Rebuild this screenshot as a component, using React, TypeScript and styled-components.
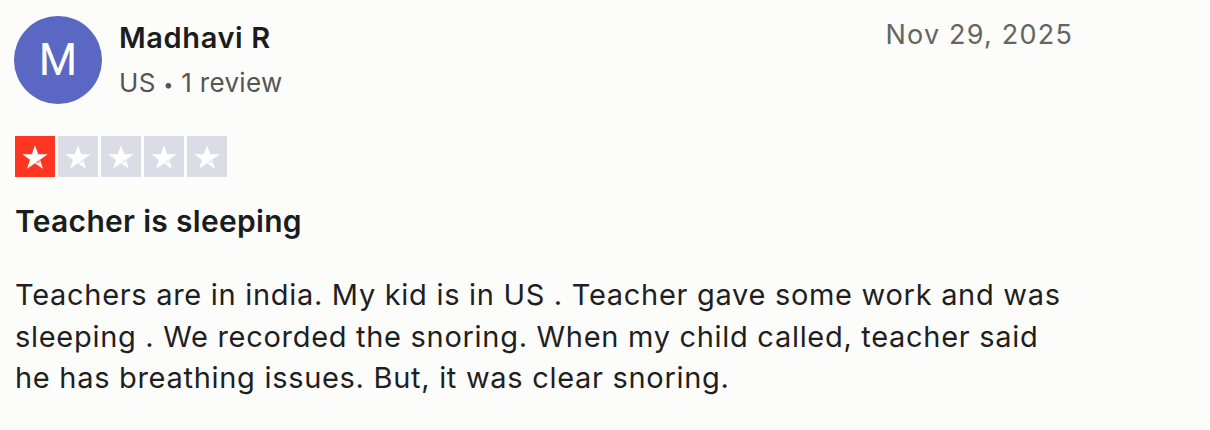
import styled, { createGlobalStyle } from 'styled-components';

const GlobalStyle = createGlobalStyle`
  html, body {
    margin: 0;
    padding: 0;
    background: #fcfcfb;
  }
  body {
    font-family: Inter, "Noto Sans", sans-serif;
    color: #1c1c1c;
  }
`;

const review = {
  name: 'Madhavi R',
  country: 'US',
  reviews: '1 review',
  date: 'Nov 29, 2025',
  rating: 1,
  title: 'Teacher is sleeping',
  body: 'Teachers are in india. My kid is in US . Teacher gave some work and was sleeping . We recorded the snoring. When my child called, teacher said he has breathing issues. But, it was clear snoring.',
};

const Star = ({ filled }: { filled: boolean }) => (
  <StarBox $filled={filled}>
    <svg width="30" height="30" viewBox="0 0 24 24">
      <path
        d="M12 2.6l2.55 7.1h7.55l-6.1 4.45 2.35 7.25L12 16.9l-6.35 4.5 2.35-7.25L1.9 9.7h7.55z"
        fill="#ffffff"
      />
      <path d="M15.35 13.7l0.9 2.75L12 16.9z" fill={filled ? '#ff3722' : '#dcdce6'} opacity="0.55" />
    </svg>
  </StarBox>
);

const App: React.FC = () => {
  return (
    <>
      <GlobalStyle />
      <Card>
        <Header>
          <Avatar>M</Avatar>
          <Who>
            <Name>{review.name}</Name>
            <Meta>
              {review.country} <Dot>•</Dot> {review.reviews}
            </Meta>
          </Who>
          <DateText>{review.date}</DateText>
        </Header>
        <Stars>
          {[1, 2, 3, 4, 5].map((n) => (
            <Star key={n} filled={n <= review.rating} />
          ))}
        </Stars>
        <Title>{review.title}</Title>
        <Body>{review.body}</Body>
      </Card>
    </>
  );
};
export default App;

const Card = styled.div`
  width: 1058px;
  padding: 16px 0 0 15px;
  display: flex;
  flex-direction: column;
`;

const Header = styled.div`
  display: flex;
  align-items: flex-start;
`;

const Avatar = styled.div`
  width: 88px;
  height: 88px;
  border-radius: 50%;
  background: #5b68c3;
  color: #ffffff;
  font-family: Roboto, "Liberation Sans", sans-serif;
  font-size: 44px;
  display: flex;
  align-items: center;
  justify-content: center;
  margin-left: -1px;
  flex-shrink: 0;
`;

const Who = styled.div`
  display: flex;
  flex-direction: column;
  margin-left: 17px;
  flex: 1;
`;

const Name = styled.div`
  font-size: 29px;
  font-weight: 600;
  line-height: 34px;
  margin-top: 5px;
  color: #1c1c1c;
  letter-spacing: 0.6px;
`;

const Meta = styled.div`
  font-size: 26px;
  line-height: 34px;
  margin-top: 11px;
  color: #555552;
  letter-spacing: 0.3px;
`;

const Dot = styled.span`
  font-size: 18px;
  vertical-align: middle;
`;

const DateText = styled.div`
  font-size: 27px;
  line-height: 34px;
  margin-top: 2px;
  color: #65655f;
  letter-spacing: 1.2px;
`;

const Stars = styled.div`
  display: flex;
  gap: 3px;
  margin-top: 32px;
`;

const StarBox = styled.div<{ $filled: boolean }>`
  width: 40px;
  height: 41px;
  background: ${(p) => (p.$filled ? '#ff3722' : '#dcdce6')};
  display: flex;
  align-items: center;
  justify-content: center;
`;

const Title = styled.div`
  font-size: 30px;
  font-weight: 600;
  line-height: 36px;
  margin-top: 26px;
  letter-spacing: 0.3px;
`;

const Body = styled.p`
  font-size: 29px;
  line-height: 41.5px;
  margin: 35px 0 0;
  color: #1f1f1f;
  letter-spacing: 0.7px;
`;
